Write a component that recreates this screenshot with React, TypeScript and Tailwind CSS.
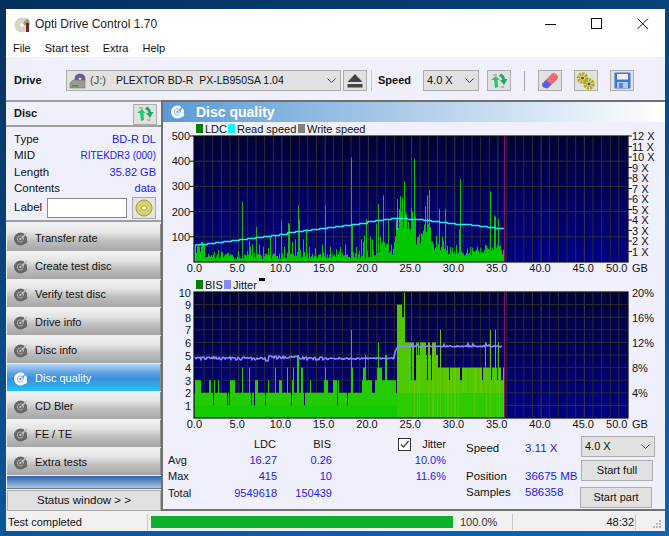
import React from "react";

function rng(seed: number) {
  let s = seed;
  return () => {
    s = (s * 16807) % 2147483647;
    return (s - 1) / 2147483646;
  };
}

const X0 = 195;
const XEND = 505;

const ldcSpikes: Record<number, number> = {
  242: 240, 250: 60, 249: 85, 252: 70, 256: 140, 259: 70, 263: 60, 268: 55, 270: 100, 275: 105, 281: 165, 284: 60, 288: 155, 289: 150,
  292: 80, 295: 90, 298: 225, 299: 170, 303: 90, 306: 130, 309: 60, 315: 55, 322: 70, 325: 225, 330: 60, 336: 50, 340: 60, 345: 70, 351: 415, 352: 150,
  356: 60, 361: 90, 363: 80, 364: 105, 366: 170, 370: 100, 372: 90, 376: 150, 378: 230, 380: 100, 383: 265, 386: 70, 388: 165, 391: 70,
  397: 250, 399: 210, 400: 260, 402: 255, 404: 320, 406: 190, 408: 160, 410: 130, 411: 215, 412: 200, 414: 410, 415: 180,
  429: 285, 427: 265, 425: 220, 439: 210, 445: 210, 460: 330, 459: 130, 490: 280, 494: 185, 495: 180, 498: 170, 504: 145,
};

function ldcValue(x: number, r: () => number) {
  if (ldcSpikes[x] !== undefined) return ldcSpikes[x];
  const a = r();
  const b = r();
  if (x < 396) {
    let v = 12 + a * 22;
    if (x < 205) v = 35 + a * 40;
    if (b > 0.75) v += 25 * r();
    if (x > 375) v += a * 40 + 15;
    return v;
  }
  if (x < 416) return 130 + a * 70;
  if (x < 432) return 70 + a * 90;
  if (x < 445) return 45 + a * 60;
  return 24 + a * 45;
}

const ldcBars = (() => {
  const r = rng(4711);
  const out: { x: number; v: number }[] = [];
  for (let x = X0 + 1; x < XEND; x++) out.push({ x, v: ldcValue(x, r) });
  return out;
})();

const cyanPts = (() => {
  const pts: string[] = [`195,262`, `195,245`];
  let lastY = 245;
  for (let x = 196; x <= 505; x += 1) {
    let y: number;
    if (x < 397) y = 245 - ((x - 196) / 201) * 27.5;
    else y = 217.5 + ((x - 397) / 108) * 11;
    const snapped = x % 8 === 0 ? Math.round(y) + 0.5 : lastY;
    pts.push(`${x},${snapped}`);
    lastY = snapped;
  }
  return pts.join(" ");
})();

const z = (n: number) => Math.round(n / 3 + 165);
const lvl3: [number, number, number][] = [
  [90, 108, 3], [132, 138, 3], [148, 150, 3], [160, 162, 3], [170, 172, 3], [195, 210, 3], [232, 234, 4], [253, 255, 4], [270, 280, 3], [290, 292, 3],
  [310, 312, 3], [330, 333, 4], [342, 350, 3], [367, 370, 4], [381, 384, 3], [385, 387, 4], [397, 402, 5], [407, 410, 4], [412, 414, 4], [422, 424, 3], [435, 437, 3],
  [477, 480, 3], [480, 482, 4], [483, 490, 3], [505, 515, 3], [520, 523, 3], [558, 560, 7], [562, 564, 4], [590, 595, 3], [595, 600, 4], [601, 603, 5], [604, 620, 3],
  [630, 637, 3], [637, 640, 4], [640, 642, 6], [643, 650, 4], [650, 660, 3], [660, 665, 5], [665, 693, 3],
];
const gaps = [145, 187, 193, 257, 267, 300, 378, 418, 515, 545].map(z);

const bisBars = (() => {
  const r = rng(991);
  const out: { x: number; v: number; late: boolean; strip: number }[] = [];
  for (let x = X0 - 1; x < XEND; x++) {
    let v = 2;
    const late = x >= 397;
    if (gaps.includes(x)) v = 1;
    if (!late) {
      for (const [a, b, h] of lvl3) if (x >= z(a) && x < z(b)) v = Math.max(v, h);
    } else {
      const a = r();
      if (x < 405) v = a > 0.6 ? 9 : 8;
      else if (x < 415) v = a > 0.25 ? 6 : a > 0.1 ? 5 : 3;
      else if (x < 438) v = a > 0.4 ? 6 : a > 0.12 ? 5 : 3;
      else v = a > 0.86 ? 3 : 4;
      if (x === 404) v = 10;
      if (x === 400) v = 9;
      if (x === 440) v = 7;
      if (x === 490 || x === 495) v = 7;
      if (x === 485 || x === 498) v = 6;
      if (x === 504) v = 5;
    }
    out.push({ x, v, late, strip: r() });
  }
  return out;
})();

const jitterPts = (() => {
  const r = rng(321);
  const pts: string[] = [];
  for (let x = X0 - 1; x < 503; x++) {
    let y: number;
    if (x < 395) {
      y = 358.5 + (r() - 0.5) * (x > 340 ? 1.4 : 3);
      if (x > 265 && x < 269) y = 361;
      if (x > 268 && x < 300) y -= 1.2;
    } else if (x < 398) y = 352 - (x - 395) * 2;
    else y = 346.3 + (r() - 0.5) * 1.4 + (r() > 0.93 ? -2 : 0);
    pts.push(`${x},${y.toFixed(1)}`);
  }
  return pts.join(" ");
})();

const xLabels = ["0.0", "5.0", "10.0", "15.0", "20.0", "25.0", "30.0", "35.0", "40.0", "45.0", "50.0"];

function Grid({ top, id }: { top: number; id: string }) {
  const v: React.ReactNode[] = [];
  for (let i = 1; i < 50; i++) {
    const x = 195.5 + i * 8.64;
    v.push(<line key={i} x1={x} x2={x} y1={top} y2={top + 126} stroke={i % 5 === 0 ? "#3a3a40" : "#2c2c2c"} strokeWidth={1} />);
  }
  return (
    <>
      <defs>
        <linearGradient id={id} x1="0" y1="0" x2="0" y2="1">
          <stop offset="0" stopColor="#000038" />
          <stop offset="1" stopColor="#000088" />
        </linearGradient>
      </defs>
      <rect x={194} y={top} width={434} height={126} fill={`url(#${id})`} />
      {v}
    </>
  );
}

function Axes({ top, textY }: { top: number; textY: number }) {
  return (
    <>
      <rect x={194} y={top} width={434} height={126} fill="none" stroke="#101010" strokeWidth={1.2} />
      <line x1={504.5} x2={504.5} y1={top} y2={top + 126} stroke="#86107e" strokeWidth={1} />
      {xLabels.map((t, i) => (
        <text
          key={t}
          x={i === 10 ? 627.5 : i === 0 ? 194.5 : 195 + i * 43.25 - 1}
          y={textY}
          textAnchor={i === 10 ? "end" : "middle"}
          fontSize={11}
          fill="#111"
        >
          {t}
        </text>
      ))}
      <text x={632} y={textY} fontSize={11} fill="#111">GB</text>
    </>
  );
}

function Legend({ x, y, items }: { x: number; y: number; items: { c: string; t: string; w: number }[] }) {
  let cx = x;
  return (
    <>
      {items.map((it) => {
        const el = (
          <g key={it.t}>
            <rect x={cx} y={y - 9} width={7} height={9} fill={it.c} />
            <text x={cx + 9} y={y} fontSize={11} fill="#111">{it.t}</text>
          </g>
        );
        cx += it.w;
        return el;
      })}
    </>
  );
}

function Charts() {
  const t1 = 136;
  const t2 = 292;
  return (
    <svg width={501} height={316} viewBox="163 122 501 316" className="block shrink-0">
      <Legend x={196} y={133} items={[{ c: "#008000", t: "LDC", w: 32 }, { c: "#00ffff", t: "Read speed", w: 70 }, { c: "#808080", t: "Write speed", w: 70 }]} />
      <Grid top={t1} id="g1" />
      {[1, 2, 3, 4].map((i) => (
        <line key={i} x1={194} x2={628} y1={t1 + i * 25.2} y2={t1 + i * 25.2} stroke="#2c2c2c" />
      ))}
      {ldcBars.map((b) => (
        <rect key={b.x} x={b.x} y={262 - b.v * 0.252} width={1} height={b.v * 0.252} fill={b.v > 130 && b.x < 397 ? "#1cb01c" : "#00c800"} />
      ))}
      <polyline points={cyanPts} fill="none" stroke="#20f0f0" strokeWidth={1.5} />
      <line x1={397} x2={397} y1={218} y2={230} stroke="#20f0f0" />
      <Axes top={t1} textY={272} />
      {["500", "400", "300", "200", "100"].map((t, i) => (
        <g key={t}>
          <text x={190} y={t1 + 4 + i * 25.2} textAnchor="end" fontSize={11} fill="#111">{t}</text>
          <line x1={190} x2={194} y1={t1 + i * 25.2} y2={t1 + i * 25.2} stroke="#111" />
        </g>
      ))}
      {["12 X", "11 X", "10 X", "9 X", "8 X", "7 X", "6 X", "5 X", "4 X", "3 X", "2 X", "1 X"].map((t, i) => (
        <g key={t}>
          <text x={632} y={t1 + 4 + i * 10.5} fontSize={11} fill="#111">{t}</text>
          <line x1={628} x2={632} y1={t1 + i * 10.5} y2={t1 + i * 10.5} stroke="#111" />
        </g>
      ))}

      <rect x={259} y={278} width={6} height={3} fill="#000" />
      <Legend x={196} y={289} items={[{ c: "#008000", t: "BIS", w: 28 }, { c: "#8888ff", t: "Jitter", w: 40 }]} />
      <Grid top={t2} id="g2" />
      {[1, 2, 3, 4, 5, 6, 7, 8, 9].map((i) => (
        <line key={i} x1={194} x2={628} y1={t2 + i * 12.6} y2={t2 + i * 12.6} stroke="#2c2c2c" />
      ))}
      {bisBars.map((b) => {
        const h = b.v * 12.6;
        const topFill = b.late ? (b.strip > 0.7 ? "#66c800" : "#4ec800") : "#22cc00";
        const lowFill = b.late ? (b.strip > 0.8 ? "#58c800" : "#2ccc00") : "#10cc00";
        return (
          <g key={b.x}>
            <rect x={b.x} y={418 - h} width={1} height={h} fill={topFill} />
            <rect x={b.x} y={b.late ? 393 : 405.4} width={1} height={b.late ? 25 : 12.6} fill={lowFill} />
          </g>
        );
      })}
      <polyline points={jitterPts} fill="none" stroke="#8888ff" strokeWidth={1.6} />
      <Axes top={t2} textY={428} />
      {["10", "9", "8", "7", "6", "5", "4", "3", "2", "1"].map((t, i) => (
        <text key={t} x={191} y={t2 + 4.5 + i * 12.6} textAnchor="end" fontSize={11} fill="#111">{t}</text>
      ))}
      {["20%", "16%", "12%", "8%", "4%"].map((t, i) => (
        <text key={t} x={632} y={t2 + 4.5 + i * 25} fontSize={11} fill="#111">{t}</text>
      ))}
    </svg>
  );
}

function DiscIcon({ light }: { light?: boolean }) {
  const c = light ? "#ffffff" : "#666666";
  const bg = light ? "#5aa8e8" : "#c4c4c4";
  return (
    <svg width={15} height={15} viewBox="0 0 15 15" className="shrink-0">
      <circle cx={6.5} cy={8} r={6.5} fill={c} />
      <circle cx={6.5} cy={8} r={3.2} fill="none" stroke={bg} strokeWidth={0.8} />
      <circle cx={6.5} cy={8} r={1.2} fill={bg} />
      <path d="M8 7 L13 1.5" stroke={bg} strokeWidth={1.6} />
      <circle cx={11} cy={10.5} r={2.2} fill={c} />
    </svg>
  );
}

function Arrows() {
  return (
    <svg width={18} height={18} viewBox="0 0 18 18">
      <path d="M1 8 L6 4 L9.5 8 L7.5 8 L8 15 L5 16 L4 8 Z" fill="#22c878" />
      <path d="M9 4 Q12 5 12.5 8 L10 8 L14 13 L17.5 7 L15 7 Q14.5 3 11 1.5 Z" fill="#1ea860" />
      <path d="M3 3 H7 M11 15 H14" stroke="#8a8a8a" strokeWidth={1} />
    </svg>
  );
}

function IconBtn({ children, w = 24 }: { children: React.ReactNode; w?: number }) {
  return (
    <div style={{ width: w }} className="h-[21px] bg-[#e1e1e1] border border-[#adadad] flex items-center justify-center shrink-0">
      {children}
    </div>
  );
}

function Chevron() {
  return (
    <svg width={9} height={5} viewBox="0 0 9 5" className="shrink-0">
      <path d="M0.5 0.5 L4.5 4.5 L8.5 0.5" fill="none" stroke="#444" strokeWidth={1} />
    </svg>
  );
}

const navItems = ["Transfer rate", "Create test disc", "Verify test disc", "Drive info", "Disc info", "Disc quality", "CD Bler", "FE / TE", "Extra tests"];

function InfoRow({ label, value, small }: { label: string; value: string; small?: boolean }) {
  return (
    <div className="flex justify-between h-[16.5px] items-center">
      <span className="text-[11.5px]">{label}</span>
      <span className={small ? "text-[#2020f0] text-[10px]" : "text-[#2020f0] text-[11px]"}>{value}</span>
    </div>
  );
}

function GripDots() {
  return (
    <svg width={9} height={9} viewBox="0 0 9 9" className="ml-auto mr-[3px] mt-[5px]">
      <g fill="#b8b8b8">
        <rect x={6} y={0} width={2} height={2} />
        <rect x={3} y={3} width={2} height={2} />
        <rect x={6} y={3} width={2} height={2} />
        <rect x={0} y={6} width={2} height={2} />
        <rect x={3} y={6} width={2} height={2} />
        <rect x={6} y={6} width={2} height={2} />
      </g>
    </svg>
  );
}

export default function App() {
  return (
    <div className="w-[669px] h-[536px] overflow-hidden bg-[linear-gradient(160deg,#05305e_0%,#0a4a86_45%,#0a66b4_100%)] pt-[9px] pl-[6px] pr-[4px] font-['Liberation_Sans',sans-serif] text-[11.5px] leading-none text-[#111]">
      <div className="w-[659px] h-[522px] bg-[#f0f0fc] flex flex-col">
        <div className="h-[30px] bg-white flex items-center pl-[8px] shrink-0">
          <svg width={17} height={17} viewBox="0 0 17 17" className="mr-[4px] shrink-0">
            <circle cx={8} cy={9} r={7.5} fill="#d8d4c4" />
            <path d="M8 9 L13 2 A7.5 7.5 0 0 1 15.5 9 Z" fill="#a09880" />
            <circle cx={8} cy={9} r={1.8} fill="#fff" />
            <rect x={12} y={7} width={3} height={9} fill="#7a2020" />
          </svg>
          <span className="text-[12px] text-[#222]">Opti Drive Control 1.70</span>
          <div className="ml-auto flex items-center">
            <svg width={46} height={14} viewBox="0 0 46 14"><path d="M0 7.5 H11" stroke="#111" strokeWidth={1} /></svg>
            <svg width={46} height={14} viewBox="0 0 46 14"><rect x={0.5} y={1.5} width={10} height={10} fill="none" stroke="#111" /></svg>
            <svg width={28} height={14} viewBox="0 0 28 14"><path d="M0.5 1.5 L11 12 M11 1.5 L0.5 12" stroke="#111" /></svg>
          </div>
        </div>
        <div className="h-[18px] bg-white flex items-start gap-[14px] pl-[7px] pt-[4px] shrink-0 text-[11px]">
          <span>File</span><span>Start test</span><span>Extra</span><span>Help</span>
        </div>
        <div className="h-[43px] flex items-center pl-[8px] shrink-0 pt-[4px]">
          <span className="w-[52px] font-bold text-[11px]">Drive</span>
          <div className="w-[275px] h-[21px] bg-[#e1e1e1] border border-[#adadad] flex items-center pl-[2px] pr-[4px]">
            <svg width={18} height={16} viewBox="0 0 18 16" className="shrink-0">
              <circle cx={11} cy={6} r={5.5} fill="#6a5a9a" />
              <circle cx={11} cy={6} r={1.5} fill="#ddd" />
              <path d="M1 10 L4 7 H16 V15 H1 Z" fill="#9a9a90" stroke="#666" strokeWidth={0.5} />
              <rect x={3} y={12} width={6} height={1.5} fill="#33a033" />
            </svg>
            <span className="ml-[3px] text-[#444] text-[11px]">(J:)</span>
            <span className="ml-[10px] whitespace-pre text-[10.5px]">PLEXTOR BD-R  PX-LB950SA 1.04</span>
            <span className="ml-auto"><Chevron /></span>
          </div>
          <div className="ml-[2px]">
            <IconBtn w={24}>
              <svg width={16} height={14} viewBox="0 0 16 14"><path d="M8 0 L15.5 8 H0.5 Z" fill="#444" /><rect x={0.5} y={10} width={15} height={3.5} fill="#444" /></svg>
            </IconBtn>
          </div>
          <div className="w-px h-[21px] bg-[#c8c8d4] ml-[4px]" />
          <span className="ml-[6px] w-[45px] font-bold text-[11px]">Speed</span>
          <div className="w-[56px] h-[21px] bg-[#e1e1e1] border border-[#adadad] flex items-center pl-[3px] pr-[4px]">
            <span className="text-[11px]">4.0 X</span>
            <span className="ml-auto"><Chevron /></span>
          </div>
          <div className="ml-[8px]"><IconBtn><Arrows /></IconBtn></div>
          <div className="w-px h-[20px] bg-[#a8a8a8] ml-[13px]" />
          <div className="ml-[13px]">
            <IconBtn>
              <svg width={18} height={17} viewBox="0 0 18 17">
                <path d="M1 12 L11 1.5 Q13 0.5 15 2 L17 4 Q17.5 6 16 7.5 L7 16 Q4 16.5 2 15 Z" fill="#f06a72" />
                <path d="M1 12 L5 8 L10 12.5 L7 16 Q4 16.5 2 15 Z" fill="#5a5af0" />
              </svg>
            </IconBtn>
          </div>
          <div className="ml-[12px]">
            <IconBtn>
              <svg width={20} height={18} viewBox="0 0 20 18">
                <circle cx={6.5} cy={6} r={4} fill="none" stroke="#b8ac00" strokeWidth={3.6} strokeDasharray="2.2 0.8" />
                <circle cx={13} cy={12} r={4} fill="none" stroke="#b8ac00" strokeWidth={3.6} strokeDasharray="2.2 0.8" />
                <circle cx={6.5} cy={6} r={1.6} fill="#555" />
                <circle cx={13} cy={12} r={1.6} fill="#555" />
              </svg>
            </IconBtn>
          </div>
          <div className="ml-[12px]">
            <IconBtn>
              <svg width={17} height={17} viewBox="0 0 17 17">
                <rect x={0.5} y={0.5} width={16} height={16} rx={1} fill="#3a78d8" />
                <rect x={3} y={2} width={11} height={5.5} fill="#f0f2f8" />
                <rect x={3} y={10} width={11} height={6} fill="#b0c8ec" />
                <rect x={5} y={11} width={4} height={5} fill="#5a88d8" />
              </svg>
            </IconBtn>
          </div>
        </div>

        <div className="flex flex-1 min-h-0">
          <div className="w-[155px] shrink-0 flex flex-col">
            <div className="h-[27px] border-t-2 border-t-[#a0a0a0] border-b-2 border-b-[#a0a0a0] flex items-center pl-[8px] pr-[4px] justify-between shrink-0">
              <span className="font-bold text-[11px]">Disc</span>
              <div className="-mb-[1px]"><IconBtn w={24}><Arrows /></IconBtn></div>
            </div>
            <div className="h-[95px] pl-[8px] pr-[5px] pt-[4px] shrink-0 border-b-2 border-b-[#a0a0a0]">
              <InfoRow label="Type" value="BD-R DL" />
              <InfoRow label="MID" value="RITEKDR3 (000)" small />
              <InfoRow label="Length" value="35.82 GB" />
              <InfoRow label="Contents" value="data" />
              <div className="flex items-center">
                <span className="w-[33px]">Label</span>
                <div className="w-[81px] h-[20px] bg-white border border-[#8a8a8a]" />
                <div className="ml-[5px] w-[24px] h-[22px] bg-[#e4e4e0] border border-[#adadad] flex items-center justify-center">
                  <svg width={18} height={18} viewBox="0 0 18 18">
                    <circle cx={9} cy={9} r={8} fill="#d8d468" stroke="#8a8a50" strokeWidth={0.8} />
                    <circle cx={9} cy={9} r={2.5} fill="#f4f4d8" stroke="#8a8a50" strokeWidth={0.6} />
                  </svg>
                </div>
              </div>
            </div>
            <div className="flex flex-col gap-[1px] pl-[1px] mt-[2px] text-[11px]">
              {navItems.map((t) => {
                const active = t === "Disc quality";
                return (
                  <div
                    key={t}
                    className={
                      active
                        ? "h-[27px] flex items-center pl-[7px] pt-[2px] border-r border-[#8a8a8a] bg-[linear-gradient(180deg,#b4d6f6_0%,#5ba0e2_35%,#3a8ede_55%,#22c4f2_100%)] text-white"
                        : "h-[27px] flex items-center pl-[7px] pt-[2px] border-r border-[#8a8a8a] bg-[linear-gradient(180deg,#f0f0f0_0%,#e6e6e6_30%,#bcbcbc_65%,#a6a6a6_100%)] text-[#111]"
                    }
                  >
                    <DiscIcon light={active} />
                    <span className="ml-[6px]">{t}</span>
                  </div>
                );
              })}
            </div>
            <div className="ml-[1px] mt-[1px] h-[13px] shrink-0 bg-[linear-gradient(180deg,#3060a8_0%,#a8c4e4_100%)] border-b border-[#777]" />
            <div className="ml-[1px] mt-[1px] h-[21px] shrink-0 bg-[#e1e1e1] border border-[#adadad] flex items-center justify-center">
              Status window &gt; &gt;
            </div>
          </div>

          <div className="flex-1 min-w-0 border-t-2 border-l-2 border-[#707070] border-b-2 flex flex-col">
            <div className="h-[20px] shrink-0 flex items-center pl-[8px] pb-[1px] bg-[linear-gradient(90deg,#5a9ad6_0%,#a8c8e8_45%,#ffffff_100%)]">
              <DiscIcon light />
              <span className="ml-[10px] text-[14px] font-bold text-white">Disc quality</span>
            </div>
            <Charts />
            <div className="flex-1 flex pl-[5px] -mt-[2px] text-[11px]">
              <div className="grid grid-cols-[32px_77px_55px] auto-rows-[16.3px] items-center w-[164px]">
                <span /><span className="text-right pr-[1px]">LDC</span><span className="text-right pr-[1px]">BIS</span>
                <span>Avg</span><span className="text-right text-[#2020f0]">16.27</span><span className="text-right text-[#2020f0]">0.26</span>
                <span>Max</span><span className="text-right text-[#2020f0]">415</span><span className="text-right text-[#2020f0]">10</span>
                <span>Total</span><span className="text-right text-[#2020f0]">9549618</span><span className="text-right text-[#2020f0]">150439</span>
              </div>
              <div className="ml-[66px] w-[48px] flex flex-col items-end">
                <div className="h-[16.3px] flex items-center w-full justify-between">
                  <span className="w-[13px] h-[13px] border border-[#333] bg-white flex items-center justify-center">
                    <svg width={11} height={11} viewBox="0 0 11 11"><path d="M2 5.5 L4.5 8 L9.5 2" fill="none" stroke="#444" strokeWidth={1.2} /></svg>
                  </span>
                  <span>Jitter</span>
                </div>
                <div className="h-[16.3px] flex items-center text-[#2020f0]">10.0%</div>
                <div className="h-[16.3px] flex items-center text-[#2020f0]">11.6%</div>
              </div>
              <div className="ml-[20px] w-[113px] grid grid-cols-[59px_54px] grid-rows-[16px_12px_16px_16px] items-center pt-[5px] text-[11.5px]">
                <span>Speed</span><span className="text-[#2020f0]">3.11 X</span>
                <span /><span />
                <span>Position</span><span className="text-[#2020f0] whitespace-nowrap">36675 MB</span>
                <span>Samples</span><span className="text-[#2020f0]">586358</span>
              </div>
              <div className="ml-[2px] flex flex-col w-[74px]">
                <div className="h-[21px] bg-[#e1e1e1] border border-[#adadad] flex items-center pl-[3px] pr-[4px]">
                  <span>4.0 X</span><span className="ml-auto"><Chevron /></span>
                </div>
                <div className="mt-[3px] h-[21px] w-[72px] bg-[#e1e1e1] border border-[#adadad] flex items-center justify-center">Start full</div>
                <div className="mt-[6px] h-[21px] w-[72px] -ml-[1px] bg-[#e1e1e1] border border-[#adadad] flex items-center justify-center">Start part</div>
              </div>
            </div>
          </div>
        </div>

        <div className="h-[20px] shrink-0 flex items-center bg-[#f0f0f0] pt-[2px] text-[11px]">
          <span className="w-[141px] pl-[2px]">Test completed</span>
          <div className="w-px h-[16px] bg-[#c8c8c8]" />
          <div className="ml-[3px] w-[302px] h-[12px] bg-[#0cb02c]" />
          <span className="ml-[7px] w-[52px] text-[#333]">100.0%</span>
          <div className="w-px h-[16px] bg-[#c8c8c8]" />
          <span className="w-[122px] text-right pr-[1px]">48:32</span>
          <div className="w-px h-[16px] bg-[#c8c8c8]" />
          <GripDots />
        </div>
      </div>
    </div>
  );
}
